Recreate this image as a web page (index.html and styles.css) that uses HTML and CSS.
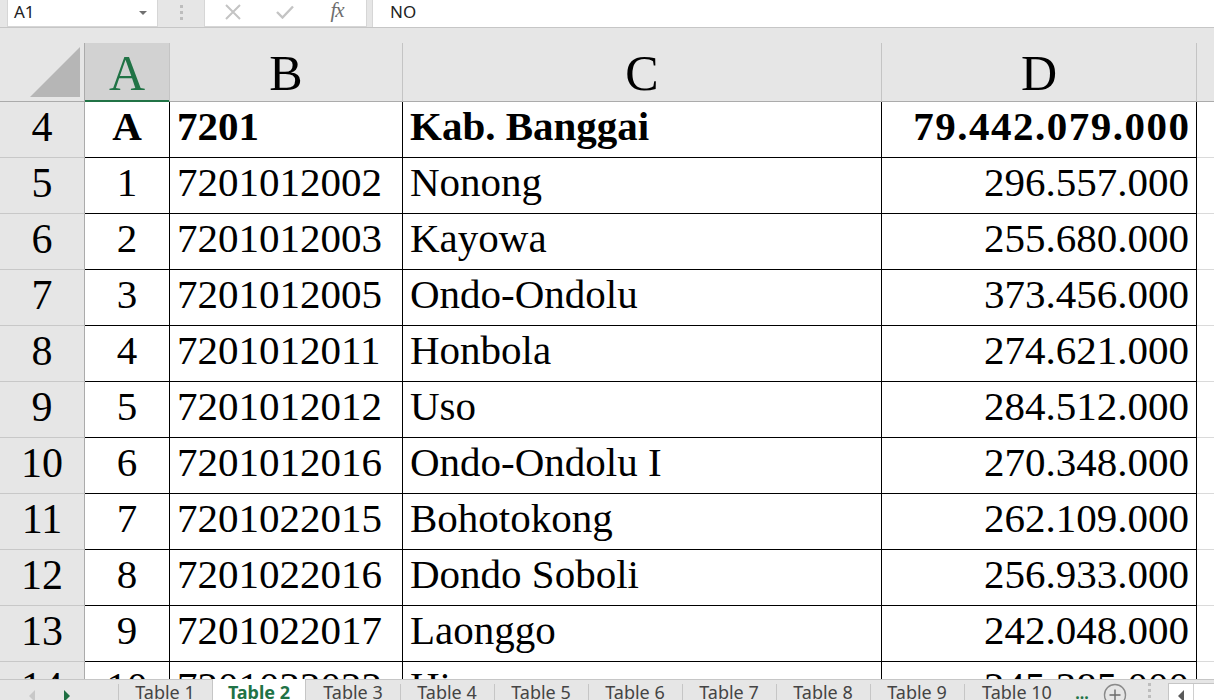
FILE: index.html
```html
<!DOCTYPE html>
<html>
<head>
<meta charset="utf-8">
<link rel="stylesheet" href="styles.css">
</head>
<body>
<div class="fbar">
  <div class="namebox"><span>A1</span><span class="caret"></span></div>
  <div class="grip"><i></i><i></i><i></i></div>
  <div class="fbtns">
    <span class="fb"><svg width="18" height="16" viewBox="0 0 18 16"><path d="M2 1 L16 15 M16 1 L2 15" stroke="#c4c4c4" stroke-width="2" fill="none"/></svg></span>
    <span class="fb"><svg width="18" height="14" viewBox="0 0 18 14"><path d="M1 7 L6.5 12.5 L17 1.5" stroke="#c4c4c4" stroke-width="2.4" fill="none"/></svg></span>
    <span class="fb fx">fx</span>
  </div>
  <div class="finput">NO</div>
</div>
<div class="gap"></div>
<div class="sheet">
  <div class="corner"><svg width="84" height="58" viewBox="0 0 84 58"><polygon points="30,54 80,4 80,54" fill="#b6b6b6"/></svg></div>
  <div class="ch sel">A</div>
  <div class="ch">B</div>
  <div class="ch">C</div>
  <div class="ch">D</div>
  <div class="ch che"></div>

  <div class="rh">4</div><div class="c ca b">A</div><div class="c cb b">7201</div><div class="c cc b">Kab. Banggai</div><div class="c cd b tot">79.442.079.000</div><div class="ce"></div>
  <div class="rh">5</div><div class="c ca">1</div><div class="c cb">7201012002</div><div class="c cc">Nonong</div><div class="c cd">296.557.000</div><div class="ce"></div>
  <div class="rh">6</div><div class="c ca">2</div><div class="c cb">7201012003</div><div class="c cc">Kayowa</div><div class="c cd">255.680.000</div><div class="ce"></div>
  <div class="rh">7</div><div class="c ca">3</div><div class="c cb">7201012005</div><div class="c cc">Ondo-Ondolu</div><div class="c cd">373.456.000</div><div class="ce"></div>
  <div class="rh">8</div><div class="c ca">4</div><div class="c cb">7201012011</div><div class="c cc">Honbola</div><div class="c cd">274.621.000</div><div class="ce"></div>
  <div class="rh">9</div><div class="c ca">5</div><div class="c cb">7201012012</div><div class="c cc">Uso</div><div class="c cd">284.512.000</div><div class="ce"></div>
  <div class="rh">10</div><div class="c ca">6</div><div class="c cb">7201012016</div><div class="c cc">Ondo-Ondolu I</div><div class="c cd">270.348.000</div><div class="ce"></div>
  <div class="rh">11</div><div class="c ca">7</div><div class="c cb">7201022015</div><div class="c cc">Bohotokong</div><div class="c cd">262.109.000</div><div class="ce"></div>
  <div class="rh">12</div><div class="c ca">8</div><div class="c cb">7201022016</div><div class="c cc">Dondo Soboli</div><div class="c cd">256.933.000</div><div class="ce"></div>
  <div class="rh">13</div><div class="c ca">9</div><div class="c cb">7201022017</div><div class="c cc">Laonggo</div><div class="c cd">242.048.000</div><div class="ce"></div>
  <div class="rh">14</div><div class="c ca">10</div><div class="c cb">7201022022</div><div class="c cc">Hion</div><div class="c cd">245.385.000</div><div class="ce"></div>
</div>
<div class="tabs">
  <div class="nav">
    <svg width="8" height="14" viewBox="0 0 8 14" class="navl"><polygon points="7,1 1,7 7,13" fill="#c8c8c8"/></svg>
    <svg width="8" height="14" viewBox="0 0 8 14" class="navr"><polygon points="1,1 7,7 1,13" fill="#1e6e42"/></svg>
  </div>
  <div class="tab">Table 1</div>
  <div class="tab active">Table 2</div>
  <div class="tab">Table 3</div>
  <div class="tab">Table 4</div>
  <div class="tab">Table 5</div>
  <div class="tab">Table 6</div>
  <div class="tab">Table 7</div>
  <div class="tab">Table 8</div>
  <div class="tab">Table 9</div>
  <div class="tab wide">Table 10</div>
  <div class="more">...</div>
  <div class="add"><svg width="24" height="24" viewBox="0 0 24 24"><circle cx="12" cy="12" r="10.5" stroke="#8a8a8a" stroke-width="1.4" fill="none"/><path d="M12 6.5 V17.5 M6.5 12 H17.5" stroke="#6a6a6a" stroke-width="1.4"/></svg></div>
  <div class="tgrip"><i></i><i></i><i></i></div>
  <div class="hscroll"><span class="sbtn"><svg width="7" height="12" viewBox="0 0 7 12"><polygon points="6,0 0,6 6,12" fill="#5a5a5a"/></svg></span><span class="strack"></span></div>
</div>
</body>
</html>
```

FILE: styles.css
```css
* { box-sizing: border-box; }
html, body { margin: 0; padding: 0; }
body {
  width: 1214px;
  height: 700px;
  overflow: hidden;
  background: #e6e6e6;
  font-family: "Liberation Serif", serif;
  color: #000;
}

/* formula bar */
.fbar {
  display: flex;
  height: 28px;
  border-bottom: 1px solid #c6c6c6;
  background: #e6e6e6;
}
.namebox {
  margin-left: 7px;
  width: 151px;
  height: 27px;
  background: #fff;
  border: 1px solid #d6d6d6;
  border-top: 0;
  display: flex;
  align-items: center;
  padding-left: 6px;
  padding-bottom: 4px;
  font: 17px "Noto Sans", sans-serif;
  color: #222;
}
.caret {
  margin-left: auto;
  margin-right: 10px;
  margin-top: 4px;
  width: 0;
  height: 0;
  border-left: 4px solid transparent;
  border-right: 4px solid transparent;
  border-top: 4px solid #707070;
}
.grip {
  width: 46px;
  display: flex;
  flex-direction: column;
  align-items: center;
  justify-content: center;
  gap: 3px;
  padding-bottom: 2px;
}
.grip i, .tgrip i {
  display: block;
  width: 3px;
  height: 3px;
  background: #bdbdbd;
}
.fbtns {
  width: 163px;
  height: 27px;
  background: #fff;
  border: 1px solid #d6d6d6;
  border-top: 0;
  display: flex;
  align-items: center;
  padding-left: 2px;
  padding-bottom: 2px;
}
.fb {
  width: 52px;
  display: flex;
  justify-content: center;
  align-items: center;
}
.fx {
  font: italic 21px "Liberation Serif", serif;
  color: #6e6e6e;
  letter-spacing: -1px;
  margin-top: -3px;
}
.finput {
  flex: 1;
  margin-left: 5px;
  height: 27px;
  background: #fff;
  border-left: 1px solid #d6d6d6;
  padding-left: 17px;
  font: 17px/23px "Noto Sans", sans-serif;
  color: #222;
}
.gap { height: 15px; }

/* sheet grid */
.sheet {
  height: 636px;
  overflow: hidden;
  display: grid;
  grid-template-columns: 85px 85px 233px 479px 315px 17px;
  grid-template-rows: 59px;
  grid-auto-rows: 56px;
  background: #fff;
}
.corner {
  background: #e6e6e6;
  border-right: 1px solid #ababab;
  border-bottom: 1px solid #ababab;
}
.corner svg { display: block; }
.ch {
  background: #e6e6e6;
  border-right: 1px solid #c4c4c4;
  border-bottom: 1px solid #ababab;
  font-size: 50px;
  line-height: 58px;
  padding-top: 1px;
  text-align: center;
}
.ch.sel {
  background: #d2d2d2;
  color: #217346;
  border-bottom-color: #217346;
  box-shadow: inset 0 -1px 0 #217346;
}
.ch.che { border-right: 0; }
.rh {
  background: #e6e6e6;
  border-right: 1px solid #ababab;
  border-bottom: 1px solid #c8c8c8;
  font-size: 42px;
  line-height: 51px;
  text-align: center;
}
.c {
  border-right: 1px solid #000;
  border-bottom: 1px solid #000;
  font-size: 41px;
  line-height: 49px;
  white-space: nowrap;
  overflow: hidden;
}
.ca { text-align: center; }
.cb, .cc { padding-left: 7px; }
.cd { text-align: right; padding-right: 7px; }
.b { font-weight: bold; }
.tot { letter-spacing: 1.5px; padding-right: 5.5px; }
.ce { border-bottom: 1px solid #dadada; }

/* sheet tabs */
.tabs {
  height: 21px;
  border-top: 1px solid #c6c6c6;
  display: flex;
  background: #e6e6e6;
  font: 18px/25px "Noto Sans", sans-serif;
  color: #444;
}
.nav {
  width: 118px;
  display: flex;
  align-items: flex-start;
  padding-top: 9px;
}
.navl { margin-left: 28px; }
.navr { margin-left: 27px; }
.tab {
  width: 94px;
  height: 21px;
  text-align: center;
  white-space: nowrap;
  background: linear-gradient(#c6c6c6, #c6c6c6) no-repeat 0 4px / 1px 100%;
}
.tab.active {
  background: #fff;
  margin-top: -1px;
  height: 22px;
  padding-top: 1px;
  color: #217346;
  font-weight: bold;
  border-left: 1px solid #c6c6c6;
  border-right: 1px solid #c6c6c6;
}
.tab.active + .tab { background: none; }
.tab.wide { width: 106px; }
.more {
  width: 24px;
  text-align: center;
  color: #217346;
  font-weight: bold;
  font-size: 16px;
  line-height: 26px;
}
.add {
  width: 42px;
  display: flex;
  justify-content: center;
  padding-top: 3px;
}
.add svg { display: block; }
.tgrip {
  width: 26px;
  display: flex;
  flex-direction: column;
  align-items: center;
  gap: 3px;
  padding-top: 3px;
}
.hscroll {
  margin-left: 6px;
  flex: 1;
  margin-top: 3px;
  display: flex;
  background: #fff;
  border-left: 1px solid #c6c6c6;
  border-top: 1px solid #c6c6c6;
}
.sbtn {
  width: 25px;
  border-right: 1px solid #d0d0d0;
  display: flex;
  justify-content: center;
  padding-top: 6px;
}
.strack { flex: 1; }
```
